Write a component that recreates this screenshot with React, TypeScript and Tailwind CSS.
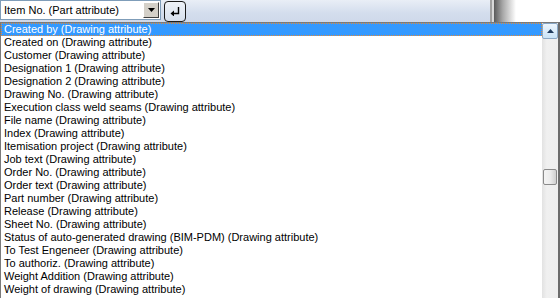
import React from "react";

const items = [
  "Created by (Drawing attribute)",
  "Created on (Drawing attribute)",
  "Customer (Drawing attribute)",
  "Designation 1 (Drawing attribute)",
  "Designation 2 (Drawing attribute)",
  "Drawing No. (Drawing attribute)",
  "Execution class weld seams (Drawing attribute)",
  "File name (Drawing attribute)",
  "Index (Drawing attribute)",
  "Itemisation project (Drawing attribute)",
  "Job text (Drawing attribute)",
  "Order No. (Drawing attribute)",
  "Order text (Drawing attribute)",
  "Part number (Drawing attribute)",
  "Release (Drawing attribute)",
  "Sheet No. (Drawing attribute)",
  "Status of auto-generated drawing (BIM-PDM) (Drawing attribute)",
  "To Test Engeneer (Drawing attribute)",
  "To authoriz. (Drawing attribute)",
  "Weight Addition (Drawing attribute)",
  "Weight of drawing (Drawing attribute)",
];

function Toolbar() {
  return (
    <div className="flex h-[22px] w-full">
      <div className="flex h-full w-[490px] items-start gap-[3px] bg-[linear-gradient(180deg,#e9eef6_0%,#d3dded_60%,#cfd9ea_100%)]">
        <div className="flex h-[20px] w-[161px] items-stretch border border-[#7f9db9] bg-white">
          <div className="flex flex-1 items-center pl-[3px] text-[11px] text-black">Item No. (Part attribute)</div>
          <div className="m-[1px] flex w-[16px] items-center justify-center border border-t-white border-l-white border-r-[#404040] border-b-[#404040] bg-[#d4d0c8]">
            <svg width="7" height="4" viewBox="0 0 7 4">
              <path d="M0 0h7L3.5 4z" fill="#000" />
            </svg>
          </div>
        </div>
        <div className="mt-[1px] flex h-[21px] w-[22px] items-center justify-center rounded-[4px] border border-[#1a1a1a] bg-[linear-gradient(180deg,#eef2f8_0%,#d6dfec_100%)]">
          <svg width="10" height="9" viewBox="0 0 10 9">
            <path d="M8.5 0v6.5H3" stroke="#000" strokeWidth="1.4" fill="none" />
            <path d="M0.5 6.5L4 3.5v6z" fill="#000" />
          </svg>
        </div>
      </div>
      <div className="h-full w-[2px] bg-[#a0a0a0]" />
      <div className="h-full w-[2px] bg-[#d8d8d8]" />
      <div className="h-full w-[22px] bg-[linear-gradient(90deg,#5a5a5a_0%,#a8a8a8_40%,#ffffff_100%)]" />
      <div className="h-full flex-1 bg-white" />
    </div>
  );
}

function Scrollbar() {
  return (
    <div className="flex w-[16px] flex-col bg-[linear-gradient(90deg,#e2e2e2_0%,#f0f0f0_30%,#eeeeee_100%)]">
      <div className="flex h-[16px] w-[16px] items-center justify-center rounded-[2px] border border-[#8aa8c6] bg-[linear-gradient(180deg,#eef6fd_0%,#c9e3f7_100%)]">
        <svg width="7" height="4" viewBox="0 0 7 4">
          <path d="M3.5 0L7 4H0z" fill="#1d3a5c" />
        </svg>
      </div>
      <div className="h-[130px]" />
      <div className="ml-[1px] h-[16px] w-[14px] rounded-[2px] border border-[#8a8a8a] bg-[linear-gradient(90deg,#f4f4f4_0%,#ececec_50%,#cfcfcf_100%)]" />
      <div className="flex-1" />
    </div>
  );
}

export default function App() {
  return (
    <div className="h-[298px] w-[560px] overflow-hidden bg-white font-['Liberation_Sans',Arial,sans-serif]">
      <Toolbar />
      <div className="flex h-[276px] border-t border-l border-r-2 border-[#7a7a7a] border-r-[#6b6b6b]">
        <div className="flex flex-1 flex-col">
          {items.map((label, i) => (
            <div
              key={label}
              className={
                i === 0
                  ? "h-[13px] border border-dotted border-[#e08a3a] bg-[#3399ff] pl-[2px] text-[11px] leading-[11px] text-white"
                  : "h-[13px] pl-[3px] text-[11px] leading-[13px] text-black"
              }
            >
              {label}
            </div>
          ))}
        </div>
        <Scrollbar />
      </div>
    </div>
  );
}
